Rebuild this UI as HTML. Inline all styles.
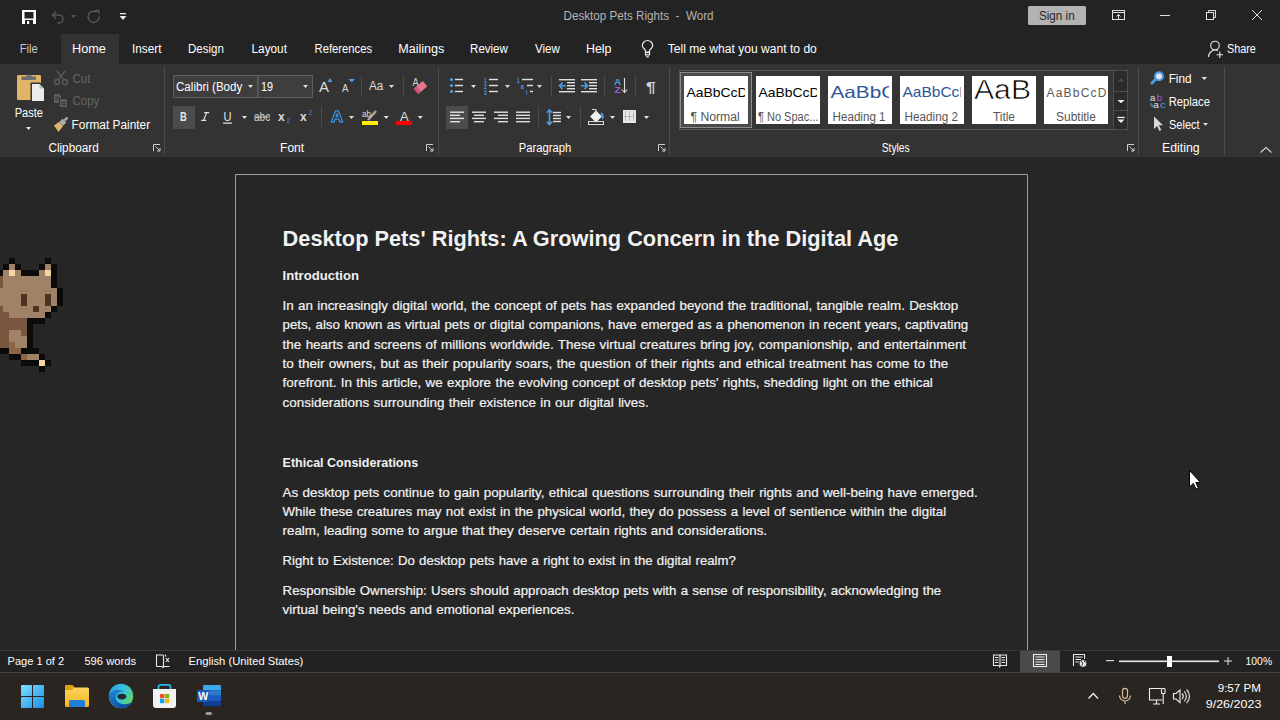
<!DOCTYPE html>
<html><head><meta charset="utf-8"><style>
html,body{margin:0;padding:0}
body{width:1280px;height:720px;overflow:hidden;position:relative;background:#262626;font-family:"Liberation Sans",sans-serif}
.t{position:absolute;white-space:pre;transform-origin:0 0}
svg{position:absolute;left:0;top:0}
</style></head><body>
<div style="position:absolute;left:0;top:0;width:1280px;height:64px;background:#232323"></div><div style="position:absolute;left:61px;top:34px;width:58px;height:30px;background:#333333"></div><div style="position:absolute;left:0;top:64px;width:1280px;height:93px;background:#333333"></div><div style="position:absolute;left:0;top:157px;width:1280px;height:493px;background:#262626"></div><div style="position:absolute;left:0;top:650px;width:1280px;height:22px;background:#222222;border-top:1px solid #3a3a3a;box-sizing:border-box"></div><div style="position:absolute;left:0;top:672px;width:1280px;height:48px;background:#2a2521;border-top:1px solid #474340;box-sizing:border-box"></div>
<svg width="1280" height="720" viewBox="0 0 1280 720">
<rect x="1028" y="6" width="58" height="19" rx="1.5" fill="#b3b3b3"/>
<path d="M235.5 650 V174.5 H1027.5 V650" fill="none" stroke="#a0a0a0" stroke-width="1"/>
<g>
<rect x="22" y="10" width="14" height="14" fill="#ffffff"/>
<rect x="24.5" y="12" width="9" height="6.5" fill="#232323"/>
<rect x="25" y="20" width="8" height="4" fill="#232323"/>
<rect x="27" y="21" width="2.2" height="3" fill="#ffffff"/>
</g>
<g fill="none" stroke="#5a5a5a" stroke-width="1.4">
<path d="M52.5 15 H59 A4 4 0 0 1 59 23 H57.5"/>
<path d="M56 11.5 L52.5 15 L56 18.5"/>
</g>
<path d="M71 15 H76 L73.5 18 Z" fill="#5a5a5a"/>
<g fill="none" stroke="#5a5a5a" stroke-width="1.4">
<path d="M96.8 12.2 A5.6 5.6 0 1 0 99.2 16.5"/>
<path d="M95.5 10.5 H98.8 V14"/>
</g>
<rect x="120" y="13" width="6" height="1.3" fill="#e8e8e8"/><path d="M119.5 16 H126.5 L123 20 Z" fill="#e8e8e8"/>
<g fill="none" stroke="#e0e0e0" stroke-width="1">
<rect x="1112.5" y="10.5" width="12" height="9"/>
<path d="M1112.5 12.5 H1124.5"/>
<path d="M1118.5 19.5 V14.5 M1116.5 16.5 L1118.5 14.5 L1120.5 16.5"/>
</g>
<rect x="1160" y="15" width="10" height="1" fill="#e0e0e0"/>
<g fill="none" stroke="#e0e0e0" stroke-width="1">
<rect x="1206.5" y="12.5" width="7" height="7"/>
<path d="M1208.5 12.5 V10.5 H1215.5 V17.5 H1213.5"/>
<path d="M1252 10 L1262 20 M1262 10 L1252 20"/>
</g>
<g fill="none" stroke="#f0f0f0" stroke-width="1.2">
<path d="M645.5 52.3 V50.8 C645.5 49.3 642.3 47.9 642.3 45.7 A5.2 5.2 0 0 1 652.7 45.7 C652.7 47.9 649.5 49.3 649.5 50.8 V52.3 Z"/>
<rect x="645.5" y="52.3" width="4" height="2.6"/>
<path d="M646.2 56.8 H648.8"/>
</g>
<g fill="none" stroke="#e8e8e8" stroke-width="1.1">
<circle cx="1215" cy="45.5" r="4.3"/>
<path d="M1208.5 57 A7 7 0 0 1 1218 50.5"/>
<path d="M1219.8 51.5 V58 M1216.5 54.8 H1223"/>
</g>
<rect x="17" y="75" width="24" height="25" rx="1.2" fill="#e2b466"/>
<path d="M21.5 80 V76.5 H26 A3.2 3.2 0 0 1 32 76.5 H36 V80 Z" fill="#6e6e6e"/>
<path d="M30.5 82.5 H40.2 L45.5 87.8 V102.5 H30.5 Z" fill="#333333"/>
<path d="M32 84 H39.5 L44 88.5 V101 H32 Z" fill="#ececec"/>
<path d="M39.5 84 V88.5 H44 Z" fill="#bdbdbd"/>
<path d="M26 127 H31 L28.5 130 Z" fill="#e8e8e8"/>
<g fill="none" stroke="#5c5c5c" stroke-width="1.3">
<circle cx="57" cy="82" r="2.5"/><circle cx="65" cy="82" r="2.5"/>
<path d="M58.3 79.8 L65 71 M63.7 79.8 L57 71"/>
</g>
<g fill="#5c5c5c">
<path d="M54 94 H59.5 L61 95.5 V103 H54 Z"/>
<path d="M59.5 98.5 H65.5 L67.5 100.5 V107.5 H59.5 Z" stroke="#333" stroke-width="1"/>
</g>
<g stroke="#333" stroke-width="0.9"><path d="M55.5 97 H59 M55.5 99 H59 M61.5 102.5 H66 M61.5 104.5 H66"/></g>
<g transform="translate(61.5,123.5) scale(0.85) rotate(-45)">
<rect x="-1" y="-3.2" width="6" height="6.4" rx="0.8" fill="#a8a8a8"/>
<rect x="5" y="-1.6" width="5" height="3.2" rx="1" fill="#a8a8a8"/>
<path d="M-1 -3.5 L-8 -4.5 L-9.5 4.5 L-1 3.5 Z" fill="#e0b26a"/>
</g>
<g fill="none" stroke="#cfcfcf" stroke-width="1">
<path d="M153.5 151 V144.5 H160"/>
<path d="M155.5 146.5 L160 151 M160 148 V151 H157"/>
</g>
<g fill="none" stroke="#cfcfcf" stroke-width="1">
<path d="M426.5 151 V144.5 H433"/>
<path d="M428.5 146.5 L433 151 M433 148 V151 H430"/>
</g>
<g fill="none" stroke="#cfcfcf" stroke-width="1">
<path d="M658.5 151 V144.5 H665"/>
<path d="M660.5 146.5 L665 151 M665 148 V151 H662"/>
</g>
<g fill="none" stroke="#cfcfcf" stroke-width="1">
<path d="M1127.5 151 V144.5 H1134"/>
<path d="M1129.5 146.5 L1134 151 M1134 148 V151 H1131"/>
</g>
<rect x="164.0" y="67" width="1" height="88" fill="#4a4a4a"/>
<rect x="438.0" y="67" width="1" height="88" fill="#4a4a4a"/>
<rect x="669.0" y="67" width="1" height="88" fill="#4a4a4a"/>
<rect x="1138.0" y="67" width="1" height="88" fill="#4a4a4a"/>
<rect x="1224.0" y="67" width="1" height="88" fill="#4a4a4a"/>
<rect x="173.5" y="75.5" width="139" height="22" fill="#3e3e3e" stroke="#5e5e5e"/>
<rect x="257" y="76" width="1.6" height="21" fill="#5e5e5e"/>
<path d="M248 85 H253 L250.5 88 Z" fill="#e0e0e0"/>
<path d="M303 85 H308 L305.5 88 Z" fill="#e0e0e0"/>
<path d="M327.5 82 H332.5 L330 78 Z" fill="#4a9ee8"/>
<path d="M348.5 79 H355 L351.75 82.5 Z" fill="#4a9ee8"/>
<rect x="361" y="75.5" width="1" height="21.5" fill="#4a4a4a"/>
<path d="M389 85 H394 L391.5 88 Z" fill="#e0e0e0"/>
<rect x="403" y="75.5" width="1" height="21.5" fill="#4a4a4a"/>
<g transform="translate(420.5,87.5) rotate(-40)"><rect x="-6" y="-3.5" width="12" height="7" rx="1" fill="#e5738f"/><rect x="-6" y="-3.5" width="3.5" height="7" fill="#c95574"/></g>
<rect x="173" y="106" width="22" height="23" fill="#4c4c4c"/>
<g stroke="#e6e6e6" stroke-width="1.2" fill="none"><path d="M206.6 112.6 L203.6 120.4 M204.2 112.6 H209.2 M201.2 120.4 H206.2"/></g>
<rect x="223" y="122.5" width="9" height="1.2" fill="#e6e6e6"/>
<path d="M242 116 H247 L244.5 119 Z" fill="#e0e0e0"/>
<rect x="254" y="116.5" width="16" height="1" fill="#cfcfcf"/>
<rect x="321" y="106" width="1" height="21.5" fill="#4a4a4a"/>
<path d="M331.3 122 L335.6 110.8 H338.4 L342.7 122 H339.8 L338.8 119.2 H335.2 L334.2 122 Z M336 116.6 H338 L337 113.6 Z" fill="none" stroke="#3a8fdc" stroke-width="1.3" stroke-linejoin="round"/>
<path d="M349 116 H354 L351.5 119 Z" fill="#e0e0e0"/>
<path d="M368 120 L376 111" stroke="#a8a8a8" stroke-width="2.6"/>
<rect x="362" y="121" width="16" height="4" fill="#ffef00"/>
<path d="M383.75 116 H388.75 L386.25 119 Z" fill="#e0e0e0"/>
<rect x="396" y="121" width="16" height="4" fill="#ff0000"/>
<path d="M417.75 116 H422.75 L420.25 119 Z" fill="#e0e0e0"/>
<circle cx="451.5" cy="79.5" r="1.6" fill="#4a9ee8"/>
<rect x="455" y="78.8" width="8" height="1.4" fill="#e0e0e0"/>
<circle cx="451.5" cy="85.5" r="1.6" fill="#4a9ee8"/>
<rect x="455" y="84.8" width="8" height="1.4" fill="#e0e0e0"/>
<circle cx="451.5" cy="91.5" r="1.6" fill="#4a9ee8"/>
<rect x="455" y="90.8" width="8" height="1.4" fill="#e0e0e0"/>
<path d="M471 85 H476 L473.5 88 Z" fill="#e0e0e0"/>
<rect x="489" y="78.8" width="9" height="1.4" fill="#e0e0e0"/>
<rect x="489" y="84.8" width="9" height="1.4" fill="#e0e0e0"/>
<rect x="489" y="90.8" width="9" height="1.4" fill="#e0e0e0"/>
<path d="M505 85 H510 L507.5 88 Z" fill="#e0e0e0"/>
<rect x="522" y="78.8" width="11" height="1.4" fill="#e0e0e0"/><rect x="527" y="84.8" width="6" height="1.4" fill="#e0e0e0"/><rect x="530" y="90.8" width="3" height="1.4" fill="#e0e0e0"/>
<path d="M537 85 H542 L539.5 88 Z" fill="#e0e0e0"/>
<rect x="551" y="75.5" width="1" height="21.5" fill="#4a4a4a"/>
<g fill="#e0e0e0">
<rect x="559" y="79" width="16" height="1.4"/><rect x="567" y="82" width="8" height="1.4"/><rect x="567" y="85" width="8" height="1.4"/><rect x="567" y="88" width="8" height="1.4"/><rect x="559" y="91" width="16" height="1.4"/>
<rect x="581" y="79" width="16" height="1.4"/><rect x="589" y="82" width="8" height="1.4"/><rect x="589" y="85" width="8" height="1.4"/><rect x="589" y="88" width="8" height="1.4"/><rect x="581" y="91" width="16" height="1.4"/>
</g>
<g fill="none" stroke="#4a9ee8" stroke-width="1.6"><path d="M559.5 85.7 H566 M562.5 82.5 L559.5 85.7 L562.5 89"/><path d="M581 85.7 H587.5 M584.5 82.5 L587.5 85.7 L584.5 89"/></g>
<rect x="604" y="75.5" width="1" height="21.5" fill="#4a4a4a"/>
<g fill="none" stroke="#e0e0e0" stroke-width="1.1"><path d="M624.5 78 V92.5 M621.8 89.5 L624.5 92.5 L627.2 89.5"/></g>
<rect x="635" y="75.5" width="1" height="21.5" fill="#4a4a4a"/>
<rect x="446" y="106" width="22" height="23" fill="#4c4c4c"/>
<rect x="450" y="111.5" width="14" height="1.4" fill="#e0e0e0"/><rect x="450" y="114.6" width="10" height="1.4" fill="#e0e0e0"/><rect x="450" y="117.7" width="14" height="1.4" fill="#e0e0e0"/><rect x="450" y="121" width="10" height="1.4" fill="#e0e0e0"/>
<rect x="472.0" y="111.5" width="14" height="1.4" fill="#e0e0e0"/><rect x="474.0" y="114.6" width="10" height="1.4" fill="#e0e0e0"/><rect x="472.0" y="117.7" width="14" height="1.4" fill="#e0e0e0"/><rect x="474.0" y="121" width="10" height="1.4" fill="#e0e0e0"/>
<rect x="494" y="111.5" width="14" height="1.4" fill="#e0e0e0"/><rect x="498" y="114.6" width="10" height="1.4" fill="#e0e0e0"/><rect x="494" y="117.7" width="14" height="1.4" fill="#e0e0e0"/><rect x="498" y="121" width="10" height="1.4" fill="#e0e0e0"/>
<rect x="516" y="111.5" width="14" height="1.4" fill="#e0e0e0"/><rect x="516" y="114.6" width="14" height="1.4" fill="#e0e0e0"/><rect x="516" y="117.7" width="14" height="1.4" fill="#e0e0e0"/><rect x="516" y="121" width="14" height="1.4" fill="#e0e0e0"/>
<rect x="538" y="106" width="1" height="21.5" fill="#4a4a4a"/>
<g fill="none" stroke="#4a9ee8" stroke-width="1.6"><path d="M549.5 110 V124.5 M546.8 112.8 L549.5 110 L552.2 112.8 M546.8 121.7 L549.5 124.5 L552.2 121.7"/></g>
<g fill="#e0e0e0"><rect x="553" y="111.8" width="8" height="1.4"/><rect x="553" y="114.8" width="8" height="1.4"/><rect x="553" y="117.8" width="8" height="1.4"/><rect x="553" y="120.8" width="8" height="1.4"/></g>
<path d="M566 116 H571 L568.5 119 Z" fill="#e0e0e0"/>
<rect x="580" y="106" width="1" height="21.5" fill="#4a4a4a"/>
<g transform="translate(596,116.5) rotate(45)"><rect x="-4.2" y="-4.2" width="8.4" height="8.4" fill="#f0f0f0"/></g>
<path d="M592 109.5 H596 V113" fill="none" stroke="#d8d8d8" stroke-width="1"/>
<path d="M601 113 C603 115 603.5 117 602 119" fill="none" stroke="#4a9ee8" stroke-width="1.8"/>
<rect x="588.5" y="121.5" width="15" height="3" fill="none" stroke="#d8d8d8" stroke-width="1"/>
<path d="M610 116 H615 L612.5 119 Z" fill="#e0e0e0"/>
<rect x="623" y="110" width="13" height="13" fill="#e8e8e8"/>
<g fill="#8a8a8a"><rect x="629" y="111.5" width="1" height="1"/><rect x="624.5" y="116" width="1" height="1"/><rect x="625" y="111.5" width="1" height="1"/><rect x="633" y="111.5" width="1" height="1"/><rect x="629" y="113.5" width="1" height="1"/><rect x="626.5" y="116" width="1" height="1"/><rect x="625" y="113.5" width="1" height="1"/><rect x="633" y="113.5" width="1" height="1"/><rect x="629" y="115.5" width="1" height="1"/><rect x="628.5" y="116" width="1" height="1"/><rect x="625" y="115.5" width="1" height="1"/><rect x="633" y="115.5" width="1" height="1"/><rect x="629" y="117.5" width="1" height="1"/><rect x="630.5" y="116" width="1" height="1"/><rect x="625" y="117.5" width="1" height="1"/><rect x="633" y="117.5" width="1" height="1"/><rect x="629" y="119.5" width="1" height="1"/><rect x="632.5" y="116" width="1" height="1"/><rect x="625" y="119.5" width="1" height="1"/><rect x="633" y="119.5" width="1" height="1"/></g>
<path d="M644 116 H649 L646.5 119 Z" fill="#e0e0e0"/>
<rect x="679.5" y="70.5" width="448" height="59" fill="#363636" stroke="#555555"/>
<rect x="680.5" y="72.5" width="71" height="55" fill="#4a4a4a" stroke="#8c8c8c"/>
<rect x="684" y="76" width="64" height="48" fill="#ffffff"/>
<rect x="756" y="76" width="64" height="48" fill="#ffffff"/>
<rect x="828" y="76" width="64" height="48" fill="#ffffff"/>
<rect x="900" y="76" width="64" height="48" fill="#ffffff"/>
<rect x="972" y="76" width="64" height="48" fill="#ffffff"/>
<rect x="1044" y="76" width="64" height="48" fill="#ffffff"/>
<clipPath id="t0"><rect x="684" y="76" width="61" height="48"/></clipPath>
<clipPath id="t1"><rect x="756" y="76" width="61" height="48"/></clipPath>
<clipPath id="t2"><rect x="828" y="76" width="61" height="48"/></clipPath>
<clipPath id="t3"><rect x="900" y="76" width="61" height="48"/></clipPath>
<clipPath id="t4"><rect x="972" y="76" width="64" height="48"/></clipPath>
<clipPath id="t5"><rect x="1044" y="76" width="62" height="48"/></clipPath>
<g font-family="Liberation Sans">
<text x="686.5" y="97" font-size="12.6" fill="#000" clip-path="url(#t0)" textLength="68" lengthAdjust="spacingAndGlyphs">AaBbCcDc</text>
<text x="758.5" y="97" font-size="12.6" fill="#000" clip-path="url(#t1)" textLength="68" lengthAdjust="spacingAndGlyphs">AaBbCcDc</text>
<text x="830.5" y="98" font-size="16.5" fill="#2f5597" clip-path="url(#t2)" textLength="76" lengthAdjust="spacingAndGlyphs">AaBbCc</text>
<text x="902.5" y="97" font-size="14.5" fill="#2f5597" clip-path="url(#t3)" textLength="68" lengthAdjust="spacingAndGlyphs">AaBbCcD</text>
<text x="974" y="98.8" font-size="27" fill="#000" font-weight="normal" clip-path="url(#t4)" textLength="57" lengthAdjust="spacingAndGlyphs" stroke="#fff" stroke-width="0.6">AaB</text>
<text x="1046.5" y="97" font-size="12" fill="#5a5a5a" clip-path="url(#t5)" textLength="60" lengthAdjust="spacing">AaBbCcD</text>
</g>
<rect x="1113.5" y="70.5" width="14" height="59" fill="#2b2b2b" stroke="#4e4e4e"/>
<rect x="1113.5" y="91" width="14" height="1" fill="#4e4e4e"/>
<rect x="1113.5" y="110" width="14" height="1" fill="#4e4e4e"/>
<path d="M1117.8 81.5 H1124.2 L1121 78.3 Z" fill="#505050"/>
<path d="M1117.5 100 H1124.5 L1121 103.3 Z" fill="#f0f0f0"/>
<rect x="1117.3" y="116.8" width="7.4" height="1.3" fill="#f0f0f0"/>
<path d="M1117.5 119.5 H1124.5 L1121 123 Z" fill="#f0f0f0"/>
<path d="M1152 83 L1156 79" stroke="#4a9ee8" stroke-width="3" stroke-linecap="round"/>
<circle cx="1159" cy="76.3" r="5" fill="#4a9ee8"/><circle cx="1159" cy="76.3" r="2.9" fill="#e8e8e8"/>
<path d="M1201.5 77 H1207 L1204.25 80 Z" fill="#e0e0e0"/>
<path d="M1151 103 V106 H1153.5 M1152.2 104.8 L1153.5 106 L1152.2 107.2" fill="none" stroke="#4a9ee8" stroke-width="1"/>
<path d="M1154 116.5 V129 L1157 126 L1159.5 131 L1161.3 130 L1158.8 125.3 L1163 125.3 Z" fill="#d8d8d8"/>
<path d="M1203 123 H1208 L1205.5 125.8 Z" fill="#e0e0e0"/>
<path d="M1260.5 152.5 L1266 147.5 L1271.5 152.5" fill="none" stroke="#d8d8d8" stroke-width="1.1"/>
<g fill="none" stroke="#e8e8e8" stroke-width="1.1">
<path d="M156.5 666.5 V655 H163 L163.5 656 M156.5 666.5 H162 L163 667.5 L164 666.5 H169.5"/>
<path d="M163.5 656 V667"/>
<path d="M166 658 L169 662 M169 658 L166 662"/>
<path d="M164.8 655 C166 655 166 656 165.5 656.5"/>
</g>
<rect x="1020" y="651" width="40" height="21" fill="#4a4a4a"/>
<g fill="none" stroke="#e8e8e8" stroke-width="1.1">
<path d="M993.5 655 H999.5 L1000 656 L1000.5 655 H1006.5 V665.5 H1000.5 L999.75 666.8 L999 665.5 H993.5 Z"/>
<path d="M995 657.5 H998.5 M995 660 H998.5 M995 662.5 H998.5 M1001.5 657.5 H1005 M1001.5 660 H1005 M1001.5 662.5 H1005"/>
<path d="M1000 656 V666"/>
<rect x="1033.5" y="654.5" width="13" height="12"/>
<path d="M1035.5 657 H1044.5 M1035.5 659.5 H1044.5 M1035.5 662 H1044.5 M1035.5 664.5 H1044.5"/>
<path d="M1073.5 666 V654.5 H1084.5 V659"/>
<path d="M1075.5 657 H1082.5 M1075.5 659.5 H1081 M1075.5 662 H1079.5"/>
</g>
<circle cx="1083" cy="663.5" r="3.8" fill="#e8e8e8" stroke="#212121" stroke-width="0.8"/>
<path d="M1081 661.5 L1083 663 L1082 665.5 M1084 661 L1085.5 662.5" stroke="#212121" stroke-width="0.9" fill="none"/>
<rect x="1106" y="660" width="8" height="1.2" fill="#d8d8d8"/>
<rect x="1119" y="660.5" width="100" height="1.6" fill="#e8e8e8"/>
<rect x="1167" y="656" width="5" height="11" fill="#ffffff"/>
<rect x="1224" y="660.5" width="8" height="1.1" fill="#d8d8d8"/>
<rect x="1227.5" y="657" width="1.1" height="8" fill="#d8d8d8"/>
<defs>
<linearGradient id="win" gradientUnits="userSpaceOnUse" x1="21" y1="685" x2="44" y2="708"><stop offset="0" stop-color="#80e0ff"/><stop offset="1" stop-color="#1a8ee8"/></linearGradient>
<linearGradient id="fold" x1="0" y1="0" x2="0" y2="1"><stop offset="0" stop-color="#ffd866"/><stop offset="1" stop-color="#f5b520"/></linearGradient>
<linearGradient id="edge1" x1="0" y1="0" x2="1" y2="1"><stop offset="0" stop-color="#35c1f1"/><stop offset="1" stop-color="#0c59a4"/></linearGradient>
<linearGradient id="edge2" x1="0" y1="0" x2="1" y2="0"><stop offset="0" stop-color="#2bb3e0"/><stop offset="1" stop-color="#6fd35a"/></linearGradient>
<linearGradient id="word" x1="0" y1="0" x2="0" y2="1"><stop offset="0" stop-color="#41a5ee"/><stop offset="0.33" stop-color="#2b7cd3"/><stop offset="0.66" stop-color="#185abd"/><stop offset="1" stop-color="#103f91"/></linearGradient>
</defs>
<g fill="url(#win)">
<rect x="21" y="685" width="11" height="11" rx="0.8"/><rect x="33" y="685" width="11" height="11" rx="0.8"/>
<rect x="21" y="697" width="11" height="11" rx="0.8"/><rect x="33" y="697" width="11" height="11" rx="0.8"/>
</g>
<path d="M65 686.5 A1.5 1.5 0 0 1 66.5 685 H72 L74.5 687.5 H87.5 A1.5 1.5 0 0 1 89 689 V705.5 A1.5 1.5 0 0 1 87.5 707 H66.5 A1.5 1.5 0 0 1 65 705.5 Z" fill="url(#fold)"/>
<path d="M65 686.5 A1.5 1.5 0 0 1 66.5 685 H72 L74.5 687.5 L72 690 H65 Z" fill="#e2a010"/>
<path d="M69 707 V701.5 A1.5 1.5 0 0 1 70.5 700 H83.5 A1.5 1.5 0 0 1 85 701.5 V707 Z" fill="#1f7fd8"/>
<defs><linearGradient id="eg3" x1="0.1" y1="0.1" x2="1" y2="0.7"><stop offset="0" stop-color="#2aa8e8"/><stop offset="0.5" stop-color="#38c4d6"/><stop offset="1" stop-color="#62d660"/></linearGradient>
<linearGradient id="eg4" x1="0" y1="0" x2="0.5" y2="1"><stop offset="0" stop-color="#2386e0"/><stop offset="1" stop-color="#0c4fa0"/></linearGradient></defs>
<circle cx="121" cy="696" r="12.2" fill="url(#eg3)"/>
<path d="M108.8 695 C108.8 702.5 114.5 708.2 121 708.2 C126 708.2 130 705.8 132.3 702.3 C129 704.2 124 704.8 120 703.3 C116.3 701.8 115 698.3 116.2 695.3 C117.5 692.3 121 690.8 124.5 691.8 C120.5 688.5 110.5 689 108.8 695 Z" fill="url(#eg4)"/>
<ellipse cx="121.8" cy="696.6" rx="4.5" ry="2.8" fill="#1f2a36"/>
<path d="M158.5 690 V687 A2.2 2.2 0 0 1 160.7 684.8 H168.3 A2.2 2.2 0 0 1 170.5 687 V690" fill="none" stroke="#2bb4ef" stroke-width="1.8"/>
<path d="M153 689 H176 V705 A3 3 0 0 1 173 708 H156 A3 3 0 0 1 153 705 Z" fill="#f2f2f2"/>
<rect x="160" y="694" width="4.3" height="4.3" fill="#f25022"/><rect x="164.9" y="694" width="4.3" height="4.3" fill="#7fba00"/>
<rect x="160" y="698.9" width="4.3" height="4.3" fill="#00a4ef"/><rect x="164.9" y="698.9" width="4.3" height="4.3" fill="#ffb900"/>
<clipPath id="wclip"><rect x="203" y="685" width="18" height="21.5" rx="1.2"/></clipPath>
<g clip-path="url(#wclip)"><rect x="203" y="685" width="18" height="5.5" fill="#41a5ee"/><rect x="203" y="690.5" width="18" height="5.3" fill="#2b7cd3"/><rect x="203" y="695.8" width="18" height="5.3" fill="#185abd"/><rect x="203" y="701.1" width="18" height="5.4" fill="#103f91"/></g>
<rect x="197" y="690" width="12.5" height="12" rx="1" fill="#185abd"/>
<text x="198.3" y="700.3" font-family="Liberation Sans" font-weight="bold" font-size="10" fill="#fff" textLength="10" lengthAdjust="spacingAndGlyphs">W</text>
<rect x="205.5" y="712" width="6.5" height="3" rx="1.5" fill="#9a9a9a"/>
<path d="M1088.5 698.5 L1093.3 693.5 L1098 698.5" fill="none" stroke="#f0f0f0" stroke-width="1.3"/>
<g fill="none" stroke="#d4bc98" stroke-width="1.2">
<rect x="1122.5" y="688.3" width="5" height="10" rx="2.5"/>
<path d="M1119.5 695.5 A5.5 5.5 0 0 0 1130.5 695.5 M1125 701 V704"/>
</g>
<g fill="none" stroke="#f0f0f0" stroke-width="1.1">
<path d="M1161 688.5 H1149.5 V700 H1162"/><path d="M1153 704 H1160 M1156.5 700 V704"/>
<rect x="1161.5" y="688.5" width="3.5" height="5" rx="0.8"/><path d="M1163.2 693.5 V704"/>
<path d="M1173.5 693.5 H1176 L1180 690 V702.5 L1176 699 H1173.5 Z"/>
<path d="M1182 693.5 A4 4 0 0 1 1182 699 M1184.3 691.3 A7 7 0 0 1 1184.3 701.2 M1186.6 689.5 A9.5 9.5 0 0 1 1186.6 703"/>
</g>
<path d="M1189.5 470.5 V487 L1193.3 483.4 L1196 489 L1198.4 488 L1195.8 482.5 L1200.5 482.5 Z" fill="#ffffff" stroke="#000" stroke-width="1"/>
<g shape-rendering="crispEdges"><rect x="9" y="258" width="6" height="6" fill="#0b0b0b"/><rect x="45" y="258" width="6" height="6" fill="#0b0b0b"/><rect x="3" y="264" width="6" height="6" fill="#0b0b0b"/><rect x="9" y="264" width="6" height="6" fill="#a08266"/><rect x="15" y="264" width="6" height="6" fill="#0b0b0b"/><rect x="39" y="264" width="6" height="6" fill="#0b0b0b"/><rect x="45" y="264" width="6" height="6" fill="#a08266"/><rect x="51" y="264" width="6" height="6" fill="#0b0b0b"/><rect x="-3" y="270" width="6" height="6" fill="#0b0b0b"/><rect x="3" y="270" width="6" height="6" fill="#a08266"/><rect x="9" y="270" width="6" height="6" fill="#f6d3a2"/><rect x="15" y="270" width="6" height="6" fill="#a08266"/><rect x="21" y="270" width="6" height="6" fill="#0b0b0b"/><rect x="27" y="270" width="6" height="6" fill="#0b0b0b"/><rect x="33" y="270" width="6" height="6" fill="#0b0b0b"/><rect x="39" y="270" width="6" height="6" fill="#a08266"/><rect x="45" y="270" width="6" height="6" fill="#f6d3a2"/><rect x="51" y="270" width="6" height="6" fill="#0b0b0b"/><rect x="-3" y="276" width="6" height="6" fill="#7a5540"/><rect x="3" y="276" width="6" height="6" fill="#a08266"/><rect x="9" y="276" width="6" height="6" fill="#a08266"/><rect x="15" y="276" width="6" height="6" fill="#a08266"/><rect x="21" y="276" width="6" height="6" fill="#a08266"/><rect x="27" y="276" width="6" height="6" fill="#a08266"/><rect x="33" y="276" width="6" height="6" fill="#a08266"/><rect x="39" y="276" width="6" height="6" fill="#a08266"/><rect x="45" y="276" width="6" height="6" fill="#a08266"/><rect x="51" y="276" width="6" height="6" fill="#0b0b0b"/><rect x="-3" y="282" width="6" height="6" fill="#7a5540"/><rect x="3" y="282" width="6" height="6" fill="#a08266"/><rect x="9" y="282" width="6" height="6" fill="#a08266"/><rect x="15" y="282" width="6" height="6" fill="#a08266"/><rect x="21" y="282" width="6" height="6" fill="#a08266"/><rect x="27" y="282" width="6" height="6" fill="#a08266"/><rect x="33" y="282" width="6" height="6" fill="#a08266"/><rect x="39" y="282" width="6" height="6" fill="#a08266"/><rect x="45" y="282" width="6" height="6" fill="#a08266"/><rect x="51" y="282" width="6" height="6" fill="#0b0b0b"/><rect x="-3" y="288" width="6" height="6" fill="#a08266"/><rect x="3" y="288" width="6" height="6" fill="#a08266"/><rect x="9" y="288" width="6" height="6" fill="#a08266"/><rect x="15" y="288" width="6" height="6" fill="#a08266"/><rect x="21" y="288" width="6" height="6" fill="#a08266"/><rect x="27" y="288" width="6" height="6" fill="#a08266"/><rect x="33" y="288" width="6" height="6" fill="#a08266"/><rect x="39" y="288" width="6" height="6" fill="#a08266"/><rect x="45" y="288" width="6" height="6" fill="#a08266"/><rect x="51" y="288" width="6" height="6" fill="#a08266"/><rect x="57" y="288" width="6" height="6" fill="#0b0b0b"/><rect x="-3" y="294" width="6" height="6" fill="#a08266"/><rect x="3" y="294" width="6" height="6" fill="#a08266"/><rect x="9" y="294" width="6" height="6" fill="#a08266"/><rect x="15" y="294" width="6" height="6" fill="#a08266"/><rect x="21" y="294" width="6" height="6" fill="#4a3322"/><rect x="27" y="294" width="6" height="6" fill="#a08266"/><rect x="33" y="294" width="6" height="6" fill="#a08266"/><rect x="39" y="294" width="6" height="6" fill="#a08266"/><rect x="45" y="294" width="6" height="6" fill="#4a3322"/><rect x="51" y="294" width="6" height="6" fill="#a08266"/><rect x="57" y="294" width="6" height="6" fill="#0b0b0b"/><rect x="-3" y="300" width="6" height="6" fill="#a08266"/><rect x="3" y="300" width="6" height="6" fill="#a08266"/><rect x="9" y="300" width="6" height="6" fill="#a08266"/><rect x="15" y="300" width="6" height="6" fill="#a08266"/><rect x="21" y="300" width="6" height="6" fill="#4a3322"/><rect x="27" y="300" width="6" height="6" fill="#a08266"/><rect x="33" y="300" width="6" height="6" fill="#a08266"/><rect x="39" y="300" width="6" height="6" fill="#a08266"/><rect x="45" y="300" width="6" height="6" fill="#4a3322"/><rect x="51" y="300" width="6" height="6" fill="#a08266"/><rect x="57" y="300" width="6" height="6" fill="#0b0b0b"/><rect x="-3" y="306" width="6" height="6" fill="#7a5540"/><rect x="3" y="306" width="6" height="6" fill="#a08266"/><rect x="9" y="306" width="6" height="6" fill="#a08266"/><rect x="15" y="306" width="6" height="6" fill="#a08266"/><rect x="21" y="306" width="6" height="6" fill="#a08266"/><rect x="27" y="306" width="6" height="6" fill="#a08266"/><rect x="33" y="306" width="6" height="6" fill="#4a3322"/><rect x="39" y="306" width="6" height="6" fill="#a08266"/><rect x="45" y="306" width="6" height="6" fill="#a08266"/><rect x="51" y="306" width="6" height="6" fill="#0b0b0b"/><rect x="-3" y="312" width="6" height="6" fill="#7a5540"/><rect x="3" y="312" width="6" height="6" fill="#7a5540"/><rect x="9" y="312" width="6" height="6" fill="#a08266"/><rect x="15" y="312" width="6" height="6" fill="#a08266"/><rect x="21" y="312" width="6" height="6" fill="#a08266"/><rect x="27" y="312" width="6" height="6" fill="#a08266"/><rect x="33" y="312" width="6" height="6" fill="#a08266"/><rect x="39" y="312" width="6" height="6" fill="#a08266"/><rect x="45" y="312" width="6" height="6" fill="#0b0b0b"/><rect x="-3" y="318" width="6" height="6" fill="#7a5540"/><rect x="3" y="318" width="6" height="6" fill="#7a5540"/><rect x="9" y="318" width="6" height="6" fill="#7a5540"/><rect x="15" y="318" width="6" height="6" fill="#7a5540"/><rect x="21" y="318" width="6" height="6" fill="#7a5540"/><rect x="27" y="318" width="6" height="6" fill="#0b0b0b"/><rect x="33" y="318" width="6" height="6" fill="#0b0b0b"/><rect x="39" y="318" width="6" height="6" fill="#0b0b0b"/><rect x="-3" y="324" width="6" height="6" fill="#7a5540"/><rect x="3" y="324" width="6" height="6" fill="#7a5540"/><rect x="9" y="324" width="6" height="6" fill="#7a5540"/><rect x="15" y="324" width="6" height="6" fill="#7a5540"/><rect x="21" y="324" width="6" height="6" fill="#7a5540"/><rect x="27" y="324" width="6" height="6" fill="#0b0b0b"/><rect x="-3" y="330" width="6" height="6" fill="#7a5540"/><rect x="3" y="330" width="6" height="6" fill="#7a5540"/><rect x="9" y="330" width="6" height="6" fill="#a08266"/><rect x="15" y="330" width="6" height="6" fill="#a08266"/><rect x="21" y="330" width="6" height="6" fill="#7a5540"/><rect x="27" y="330" width="6" height="6" fill="#0b0b0b"/><rect x="-3" y="336" width="6" height="6" fill="#7a5540"/><rect x="3" y="336" width="6" height="6" fill="#7a5540"/><rect x="9" y="336" width="6" height="6" fill="#a08266"/><rect x="15" y="336" width="6" height="6" fill="#a08266"/><rect x="21" y="336" width="6" height="6" fill="#a08266"/><rect x="27" y="336" width="6" height="6" fill="#0b0b0b"/><rect x="-3" y="342" width="6" height="6" fill="#7a5540"/><rect x="3" y="342" width="6" height="6" fill="#7a5540"/><rect x="9" y="342" width="6" height="6" fill="#8c6448"/><rect x="15" y="342" width="6" height="6" fill="#a08266"/><rect x="21" y="342" width="6" height="6" fill="#a08266"/><rect x="27" y="342" width="6" height="6" fill="#0b0b0b"/><rect x="-3" y="348" width="6" height="6" fill="#0b0b0b"/><rect x="3" y="348" width="6" height="6" fill="#0b0b0b"/><rect x="9" y="348" width="6" height="6" fill="#8c6448"/><rect x="15" y="348" width="6" height="6" fill="#8c6448"/><rect x="21" y="348" width="6" height="6" fill="#0b0b0b"/><rect x="27" y="348" width="6" height="6" fill="#0b0b0b"/><rect x="33" y="348" width="6" height="6" fill="#0b0b0b"/><rect x="9" y="354" width="6" height="6" fill="#0b0b0b"/><rect x="15" y="354" width="6" height="6" fill="#0b0b0b"/><rect x="21" y="354" width="6" height="6" fill="#8c6448"/><rect x="27" y="354" width="6" height="6" fill="#a08266"/><rect x="33" y="354" width="6" height="6" fill="#a08266"/><rect x="39" y="354" width="6" height="6" fill="#0b0b0b"/><rect x="21" y="360" width="6" height="6" fill="#0b0b0b"/><rect x="27" y="360" width="6" height="6" fill="#0b0b0b"/><rect x="33" y="360" width="6" height="6" fill="#0b0b0b"/><rect x="39" y="360" width="6" height="6" fill="#f6d3a2"/><rect x="45" y="360" width="6" height="6" fill="#0b0b0b"/><rect x="39" y="366" width="6" height="6" fill="#0b0b0b"/></g>
</svg>
<svg width="1280" height="720" viewBox="0 0 1280 720" style="white-space:pre">
<text x="563.57" y="20" font-family="Liberation Sans" font-size="12.5" fill="#b4b4b4" textLength="149.99" lengthAdjust="spacingAndGlyphs" xml:space="preserve" >Desktop Pets Rights  -  Word</text>
<text x="1039.00" y="20" font-family="Liberation Sans" font-size="12" fill="#262626" textLength="35.65" lengthAdjust="spacingAndGlyphs" xml:space="preserve" >Sign in</text>
<text x="19.68" y="53" font-family="Liberation Sans" font-size="12.3" fill="#c8c8c8" textLength="18.17" lengthAdjust="spacingAndGlyphs" xml:space="preserve" >File</text>
<text x="71.97" y="53" font-family="Liberation Sans" font-size="12.3" fill="#ffffff" textLength="33.87" lengthAdjust="spacingAndGlyphs" xml:space="preserve" >Home</text>
<text x="132.04" y="53" font-family="Liberation Sans" font-size="12.3" fill="#ffffff" textLength="29.40" lengthAdjust="spacingAndGlyphs" xml:space="preserve" >Insert</text>
<text x="188.07" y="53" font-family="Liberation Sans" font-size="12.3" fill="#ffffff" textLength="35.78" lengthAdjust="spacingAndGlyphs" xml:space="preserve" >Design</text>
<text x="251.54" y="53" font-family="Liberation Sans" font-size="12.3" fill="#ffffff" textLength="35.40" lengthAdjust="spacingAndGlyphs" xml:space="preserve" >Layout</text>
<text x="314.58" y="53" font-family="Liberation Sans" font-size="12.3" fill="#ffffff" textLength="57.55" lengthAdjust="spacingAndGlyphs" xml:space="preserve" >References</text>
<text x="398.28" y="53" font-family="Liberation Sans" font-size="12.3" fill="#ffffff" textLength="45.87" lengthAdjust="spacingAndGlyphs" xml:space="preserve" >Mailings</text>
<text x="470.06" y="53" font-family="Liberation Sans" font-size="12.3" fill="#ffffff" textLength="37.83" lengthAdjust="spacingAndGlyphs" xml:space="preserve" >Review</text>
<text x="535.00" y="53" font-family="Liberation Sans" font-size="12.3" fill="#ffffff" textLength="24.89" lengthAdjust="spacingAndGlyphs" xml:space="preserve" >View</text>
<text x="585.99" y="53" font-family="Liberation Sans" font-size="12.3" fill="#ffffff" textLength="25.55" lengthAdjust="spacingAndGlyphs" xml:space="preserve" >Help</text>
<text x="667.70" y="53" font-family="Liberation Sans" font-size="12.3" fill="#ffffff" textLength="149.14" lengthAdjust="spacingAndGlyphs" xml:space="preserve" >Tell me what you want to do</text>
<text x="1227.00" y="53" font-family="Liberation Sans" font-size="12.3" fill="#ffffff" textLength="28.86" lengthAdjust="spacingAndGlyphs" xml:space="preserve" >Share</text>
<text x="14.72" y="117" font-family="Liberation Sans" font-size="12.5" fill="#ffffff" textLength="28.24" lengthAdjust="spacingAndGlyphs" xml:space="preserve" >Paste</text>
<text x="72.50" y="83" font-family="Liberation Sans" font-size="12.5" fill="#666666" textLength="18.01" lengthAdjust="spacingAndGlyphs" xml:space="preserve" >Cut</text>
<text x="72.50" y="105" font-family="Liberation Sans" font-size="12.5" fill="#666666" textLength="26.81" lengthAdjust="spacingAndGlyphs" xml:space="preserve" >Copy</text>
<text x="71.55" y="129" font-family="Liberation Sans" font-size="12.5" fill="#ffffff" textLength="78.61" lengthAdjust="spacingAndGlyphs" xml:space="preserve" >Format Painter</text>
<text x="48.40" y="152" font-family="Liberation Sans" font-size="12.5" fill="#ffffff" textLength="50.30" lengthAdjust="spacingAndGlyphs" xml:space="preserve" >Clipboard</text>
<text x="280.03" y="152" font-family="Liberation Sans" font-size="12.5" fill="#ffffff" textLength="24.16" lengthAdjust="spacingAndGlyphs" xml:space="preserve" >Font</text>
<text x="518.80" y="152" font-family="Liberation Sans" font-size="12.5" fill="#ffffff" textLength="52.40" lengthAdjust="spacingAndGlyphs" xml:space="preserve" >Paragraph</text>
<text x="881.75" y="152" font-family="Liberation Sans" font-size="12.5" fill="#ffffff" textLength="27.96" lengthAdjust="spacingAndGlyphs" xml:space="preserve" >Styles</text>
<text x="1162.02" y="152" font-family="Liberation Sans" font-size="12.5" fill="#ffffff" textLength="37.64" lengthAdjust="spacingAndGlyphs" xml:space="preserve" >Editing</text>
<text x="176.00" y="91" font-family="Liberation Sans" font-size="12.5" fill="#ffffff" textLength="66.30" lengthAdjust="spacingAndGlyphs" xml:space="preserve" >Calibri (Body</text>
<text x="261.00" y="91" font-family="Liberation Sans" font-size="12.5" fill="#ffffff" textLength="11.96" lengthAdjust="spacingAndGlyphs" xml:space="preserve" >19</text>
<text x="1168.66" y="83" font-family="Liberation Sans" font-size="12.5" fill="#ffffff" textLength="22.90" lengthAdjust="spacingAndGlyphs" xml:space="preserve" >Find</text>
<text x="1168.70" y="106" font-family="Liberation Sans" font-size="12.5" fill="#ffffff" textLength="41.26" lengthAdjust="spacingAndGlyphs" xml:space="preserve" >Replace</text>
<text x="1169.00" y="129" font-family="Liberation Sans" font-size="12.5" fill="#ffffff" textLength="30.54" lengthAdjust="spacingAndGlyphs" xml:space="preserve" >Select</text>
<text x="282.60" y="246" font-family="Liberation Sans" font-size="22.3" fill="#f2f2f2" font-weight="bold" textLength="615.79" lengthAdjust="spacingAndGlyphs" xml:space="preserve" >Desktop Pets' Rights: A Growing Concern in the Digital Age</text>
<text x="282.60" y="280" font-family="Liberation Sans" font-size="13" fill="#f2f2f2" font-weight="bold" textLength="76.34" lengthAdjust="spacingAndGlyphs" xml:space="preserve" >Introduction</text>
<text x="282.60" y="310" font-family="Liberation Sans" font-size="13" fill="#f2f2f2" textLength="675.64" lengthAdjust="spacingAndGlyphs" xml:space="preserve" style="word-spacing:0.6px" stroke="#f2f2f2" stroke-width="0.2">In an increasingly digital world, the concept of pets has expanded beyond the traditional, tangible realm. Desktop</text>
<text x="282.60" y="329" font-family="Liberation Sans" font-size="13" fill="#f2f2f2" textLength="685.63" lengthAdjust="spacingAndGlyphs" xml:space="preserve" style="word-spacing:0.6px" stroke="#f2f2f2" stroke-width="0.2">pets, also known as virtual pets or digital companions, have emerged as a phenomenon in recent years, captivating</text>
<text x="282.60" y="349" font-family="Liberation Sans" font-size="13" fill="#f2f2f2" textLength="683.50" lengthAdjust="spacingAndGlyphs" xml:space="preserve" style="word-spacing:0.6px" stroke="#f2f2f2" stroke-width="0.2">the hearts and screens of millions worldwide. These virtual creatures bring joy, companionship, and entertainment</text>
<text x="282.60" y="368" font-family="Liberation Sans" font-size="13" fill="#f2f2f2" textLength="665.64" lengthAdjust="spacingAndGlyphs" xml:space="preserve" style="word-spacing:0.6px" stroke="#f2f2f2" stroke-width="0.2">to their owners, but as their popularity soars, the question of their rights and ethical treatment has come to the</text>
<text x="282.60" y="387" font-family="Liberation Sans" font-size="13" fill="#f2f2f2" textLength="650.28" lengthAdjust="spacingAndGlyphs" xml:space="preserve" style="word-spacing:0.6px" stroke="#f2f2f2" stroke-width="0.2">forefront. In this article, we explore the evolving concept of desktop pets' rights, shedding light on the ethical</text>
<text x="282.60" y="407" font-family="Liberation Sans" font-size="13" fill="#f2f2f2" textLength="366.13" lengthAdjust="spacingAndGlyphs" xml:space="preserve" style="word-spacing:0.6px" stroke="#f2f2f2" stroke-width="0.2">considerations surrounding their existence in our digital lives.</text>
<text x="282.60" y="497" font-family="Liberation Sans" font-size="13" fill="#f2f2f2" textLength="695.03" lengthAdjust="spacingAndGlyphs" xml:space="preserve" style="word-spacing:0.6px" stroke="#f2f2f2" stroke-width="0.2">As desktop pets continue to gain popularity, ethical questions surrounding their rights and well-being have emerged.</text>
<text x="282.60" y="516" font-family="Liberation Sans" font-size="13" fill="#f2f2f2" textLength="663.54" lengthAdjust="spacingAndGlyphs" xml:space="preserve" style="word-spacing:0.6px" stroke="#f2f2f2" stroke-width="0.2">While these creatures may not exist in the physical world, they do possess a level of sentience within the digital</text>
<text x="282.60" y="535" font-family="Liberation Sans" font-size="13" fill="#f2f2f2" textLength="484.43" lengthAdjust="spacingAndGlyphs" xml:space="preserve" style="word-spacing:0.6px" stroke="#f2f2f2" stroke-width="0.2">realm, leading some to argue that they deserve certain rights and considerations.</text>
<text x="282.60" y="565" font-family="Liberation Sans" font-size="13" fill="#f2f2f2" textLength="453.23" lengthAdjust="spacingAndGlyphs" xml:space="preserve" style="word-spacing:0.6px" stroke="#f2f2f2" stroke-width="0.2">Right to Existence: Do desktop pets have a right to exist in the digital realm?</text>
<text x="282.60" y="595" font-family="Liberation Sans" font-size="13" fill="#f2f2f2" textLength="658.63" lengthAdjust="spacingAndGlyphs" xml:space="preserve" style="word-spacing:0.6px" stroke="#f2f2f2" stroke-width="0.2">Responsible Ownership: Users should approach desktop pets with a sense of responsibility, acknowledging the</text>
<text x="282.60" y="614" font-family="Liberation Sans" font-size="13" fill="#f2f2f2" textLength="291.83" lengthAdjust="spacingAndGlyphs" xml:space="preserve" style="word-spacing:0.6px" stroke="#f2f2f2" stroke-width="0.2">virtual being's needs and emotional experiences.</text>
<text x="282.60" y="467" font-family="Liberation Sans" font-size="13" fill="#f2f2f2" font-weight="bold" textLength="135.52" lengthAdjust="spacingAndGlyphs" xml:space="preserve" >Ethical Considerations</text>
<text x="7.50" y="665" font-family="Liberation Sans" font-size="11.5" fill="#ffffff" textLength="56.63" lengthAdjust="spacingAndGlyphs" xml:space="preserve" >Page 1 of 2</text>
<text x="84.40" y="665" font-family="Liberation Sans" font-size="11.5" fill="#ffffff" textLength="51.61" lengthAdjust="spacingAndGlyphs" xml:space="preserve" >596 words</text>
<text x="188.50" y="665" font-family="Liberation Sans" font-size="11.5" fill="#ffffff" textLength="114.83" lengthAdjust="spacingAndGlyphs" xml:space="preserve" >English (United States)</text>
<text x="1245.60" y="665" font-family="Liberation Sans" font-size="11.5" fill="#ffffff" textLength="26.50" lengthAdjust="spacingAndGlyphs" xml:space="preserve" >100%</text>
<text x="1217.70" y="692" font-family="Liberation Sans" font-size="11.5" fill="#ffffff" textLength="43.18" lengthAdjust="spacingAndGlyphs" xml:space="preserve" >9:57 PM</text>
<text x="1205.70" y="708" font-family="Liberation Sans" font-size="11.5" fill="#ffffff" textLength="55.73" lengthAdjust="spacingAndGlyphs" xml:space="preserve" >9/26/2023</text>
<text x="319.00" y="92" font-family="Liberation Sans" font-size="15" fill="#dcdcdc" xml:space="preserve" >A</text>
<text x="342.00" y="92" font-family="Liberation Sans" font-size="11" fill="#dcdcdc" textLength="6.42" lengthAdjust="spacingAndGlyphs" xml:space="preserve" >A</text>
<text x="369.00" y="90" font-family="Liberation Sans" font-size="13" fill="#dcdcdc" textLength="14.31" lengthAdjust="spacingAndGlyphs" xml:space="preserve" >Aa</text>
<text x="412.50" y="86" font-family="Liberation Sans" font-size="10" fill="#cfcfcf" textLength="6.19" lengthAdjust="spacingAndGlyphs" xml:space="preserve" >A</text>
<text x="180.00" y="121" font-family="Liberation Sans" font-size="12" fill="#e6e6e6" font-weight="bold" textLength="6.74" lengthAdjust="spacingAndGlyphs" xml:space="preserve" >B</text>
<text x="223.50" y="121" font-family="Liberation Sans" font-size="12.5" fill="#e6e6e6" textLength="8.02" lengthAdjust="spacingAndGlyphs" xml:space="preserve" >U</text>
<text x="254.00" y="121" font-family="Liberation Sans" font-size="12.5" fill="#cfcfcf" textLength="16.20" lengthAdjust="spacingAndGlyphs" xml:space="preserve" >abc</text>
<text x="278.00" y="121" font-family="Liberation Sans" font-size="12" fill="#dcdcdc" font-weight="bold" xml:space="preserve" >x</text>
<text x="287.00" y="123" font-family="Liberation Sans" font-size="7" fill="#4a9ee8" textLength="2.92" lengthAdjust="spacingAndGlyphs" xml:space="preserve" >2</text>
<text x="300.00" y="121" font-family="Liberation Sans" font-size="12" fill="#dcdcdc" font-weight="bold" xml:space="preserve" >x</text>
<text x="309.00" y="115" font-family="Liberation Sans" font-size="7" fill="#4a9ee8" textLength="2.92" lengthAdjust="spacingAndGlyphs" xml:space="preserve" >2</text>
<text x="362.00" y="117" font-family="Liberation Sans" font-size="9.5" fill="#dcdcdc" textLength="9.25" lengthAdjust="spacingAndGlyphs" xml:space="preserve" >ab</text>
<text x="400.00" y="121" font-family="Liberation Sans" font-size="13" fill="#dcdcdc" xml:space="preserve" >A</text>
<text x="484.00" y="83" font-family="Liberation Sans" font-size="6.5" fill="#4a9ee8" font-weight="bold" textLength="2.71" lengthAdjust="spacingAndGlyphs" xml:space="preserve" >1</text>
<text x="484.00" y="89" font-family="Liberation Sans" font-size="6.5" fill="#4a9ee8" font-weight="bold" textLength="2.71" lengthAdjust="spacingAndGlyphs" xml:space="preserve" >2</text>
<text x="484.00" y="95" font-family="Liberation Sans" font-size="6.5" fill="#4a9ee8" font-weight="bold" textLength="2.71" lengthAdjust="spacingAndGlyphs" xml:space="preserve" >3</text>
<text x="517.00" y="83" font-family="Liberation Sans" font-size="6.5" fill="#4a9ee8" font-weight="bold" textLength="2.71" lengthAdjust="spacingAndGlyphs" xml:space="preserve" >1</text>
<text x="521.00" y="89" font-family="Liberation Sans" font-size="6.5" fill="#4a9ee8" font-weight="bold" textLength="2.71" lengthAdjust="spacingAndGlyphs" xml:space="preserve" >a</text>
<text x="526.00" y="95" font-family="Liberation Sans" font-size="6.5" fill="#4a9ee8" font-weight="bold" textLength="1.35" lengthAdjust="spacingAndGlyphs" xml:space="preserve" >i</text>
<text x="614.00" y="85" font-family="Liberation Sans" font-size="8.5" fill="#4a9ee8" font-weight="bold" textLength="7.16" lengthAdjust="spacingAndGlyphs" xml:space="preserve" >A</text>
<text x="614.50" y="93" font-family="Liberation Sans" font-size="8.5" fill="#9b5fd0" font-weight="bold" textLength="6.23" lengthAdjust="spacingAndGlyphs" xml:space="preserve" >Z</text>
<text x="646.00" y="92" font-family="Liberation Sans" font-size="14" fill="#cfcfcf" font-weight="bold" textLength="9.73" lengthAdjust="spacingAndGlyphs" xml:space="preserve" >¶</text>
<text x="690.50" y="121" font-family="Liberation Sans" font-size="12.5" fill="#555555" textLength="49.26" lengthAdjust="spacingAndGlyphs" xml:space="preserve" >¶ Normal</text>
<text x="758.00" y="121" font-family="Liberation Sans" font-size="12.5" fill="#555555" textLength="60.42" lengthAdjust="spacingAndGlyphs" xml:space="preserve" >¶ No Spac...</text>
<text x="832.57" y="121" font-family="Liberation Sans" font-size="12.5" fill="#555555" textLength="52.99" lengthAdjust="spacingAndGlyphs" xml:space="preserve" >Heading 1</text>
<text x="904.56" y="121" font-family="Liberation Sans" font-size="12.5" fill="#555555" textLength="53.39" lengthAdjust="spacingAndGlyphs" xml:space="preserve" >Heading 2</text>
<text x="993.00" y="121" font-family="Liberation Sans" font-size="12.5" fill="#555555" textLength="21.95" lengthAdjust="spacingAndGlyphs" xml:space="preserve" >Title</text>
<text x="1056.00" y="121" font-family="Liberation Sans" font-size="12.5" fill="#555555" textLength="39.95" lengthAdjust="spacingAndGlyphs" xml:space="preserve" >Subtitle</text>
<text x="1150.00" y="101" font-family="Liberation Sans" font-size="9.5" fill="#e0e0e0" xml:space="preserve" >a</text>
<text x="1156.50" y="101" font-family="Liberation Sans" font-size="9.5" fill="#9b5fd0" textLength="5.81" lengthAdjust="spacingAndGlyphs" xml:space="preserve" >b</text>
<text x="1153.50" y="108" font-family="Liberation Sans" font-size="9.5" fill="#e0e0e0" xml:space="preserve" >a</text>
<text x="1160.00" y="108" font-family="Liberation Sans" font-size="9.5" fill="#4a9ee8" textLength="5.70" lengthAdjust="spacingAndGlyphs" xml:space="preserve" >c</text>
</svg>
</body></html>
